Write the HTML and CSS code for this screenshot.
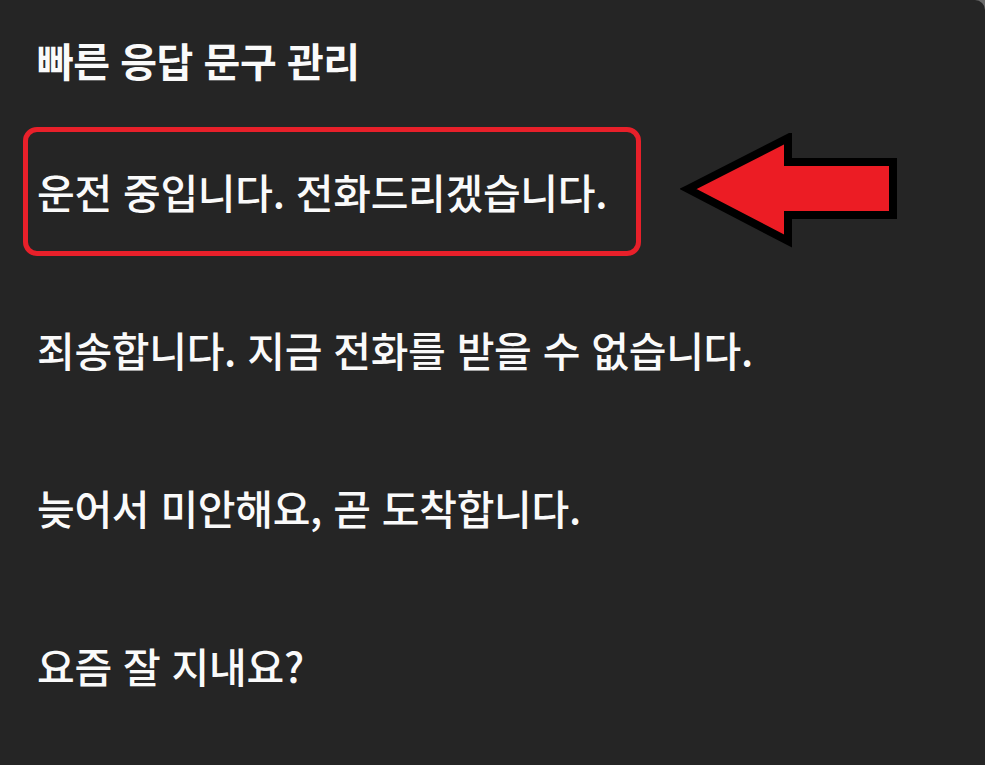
FILE: index.html
```html
<!DOCTYPE html>
<html lang="ko">
<head>
<meta charset="utf-8">
<title>빠른 응답 문구 관리</title>
<link rel="stylesheet" href="styles.css">
</head>
<body>
<main class="panel">
  <h1 class="title">빠른 응답 문구 관리</h1>
  <ul class="list">
    <li class="row">
      <div class="marked">운전 중입니다. 전화드리겠습니다.</div>
    </li>
    <li class="row">죄송합니다. 지금 전화를 받을 수 없습니다.</li>
    <li class="row">늦어서 미안해요, 곧 도착합니다.</li>
    <li class="row">요즘 잘 지내요?</li>
  </ul>
  <svg class="arrow" width="230" height="130" viewBox="0 0 230 130" aria-hidden="true">
    <polygon points="8,56 108,5 108,29 213,29 213,82 108,82 108,108" fill="#ec1c24" stroke="#000" stroke-width="8" stroke-linejoin="miter" stroke-miterlimit="10"/>
  </svg>
</main>
</body>
</html>
```

FILE: styles.css
```css
html, body {
  margin: 0;
  padding: 0;
  background: #6a6a6a;
}
body {
  width: 985px;
  height: 765px;
  overflow: hidden;
}
.panel {
  position: relative;
  box-sizing: border-box;
  width: 985px;
  height: 765px;
  background: #252525;
  border-top-right-radius: 10px;
  padding: 0 0 0 37px;
  color: #fafafa;
  font-family: "Noto Sans CJK KR", "Noto Sans", sans-serif;
}
.title {
  margin: 0;
  height: 112px;
  box-sizing: border-box;
  padding-top: 32px;
  font-size: 40px;
  line-height: 56px;
  font-weight: 700;
  letter-spacing: -0.5px;
  white-space: nowrap;
}
.list {
  list-style: none;
  margin: 0;
  padding: 0;
}
.row {
  height: 158px;
  display: flex;
  align-items: center;
  font-size: 41px;
  font-weight: 500;
  letter-spacing: -0.3px;
  white-space: nowrap;
}
.marked {
  box-sizing: border-box;
  margin-left: -14px;
  width: 618px;
  height: 129px;
  border: 5px solid #e8202a;
  border-radius: 14px;
  padding-left: 9px;
  display: flex;
  align-items: center;
}
.arrow {
  position: absolute;
  left: 680px;
  top: 133px;
}
```
